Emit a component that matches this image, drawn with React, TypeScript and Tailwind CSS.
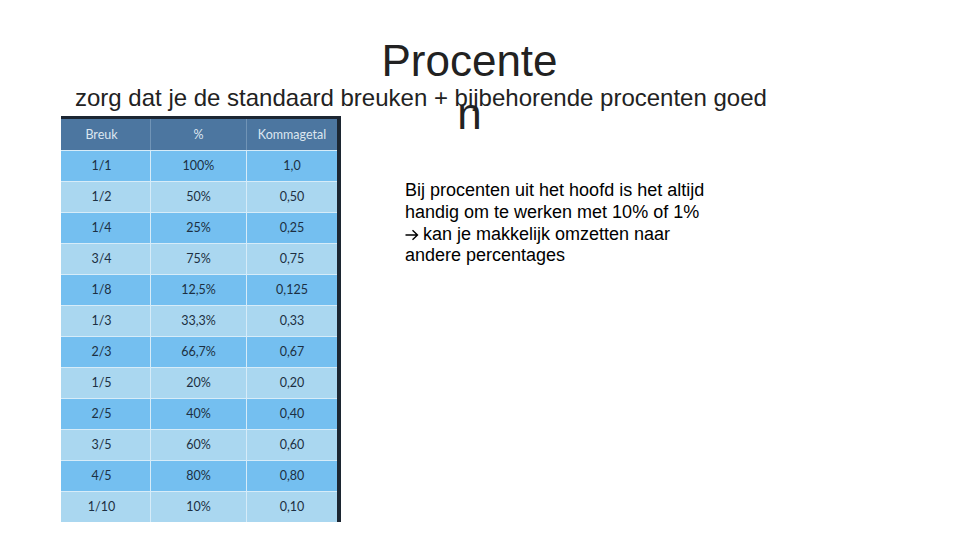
const rows = [
  ['1/1', '100%', '1,0'],
  ['1/2', '50%', '0,50'],
  ['1/4', '25%', '0,25'],
  ['3/4', '75%', '0,75'],
  ['1/8', '12,5%', '0,125'],
  ['1/3', '33,3%', '0,33'],
  ['2/3', '66,7%', '0,67'],
  ['1/5', '20%', '0,20'],
  ['2/5', '40%', '0,40'],
  ['3/5', '60%', '0,60'],
  ['4/5', '80%', '0,80'],
  ['1/10', '10%', '0,10'],
];

function PercentTable() {
  return (
    <div className="ml-[61px] w-[280px] border-t-[3px] border-r-[4px] border-[#1c2632] font-['Lato',sans-serif] text-[12.5px]">
      <div className="grid h-[31px] grid-cols-[89px_96px_91px] bg-[#4c76a0] text-[#dde7f0]">
        <div className="flex items-center justify-center pr-[8px]">Breuk</div>
        <div className="flex items-center justify-center border-l border-[#7194b6]">%</div>
        <div className="flex items-center justify-center border-l border-[#7194b6]">Kommagetal</div>
      </div>
      {rows.map(([breuk, pct, komma], i) => (
        <div
          key={breuk}
          className={
            'grid h-[31px] grid-cols-[89px_96px_91px] border-t border-[#d6ecf9] text-[#1c2f42] ' +
            (i % 2 === 0 ? 'bg-[#74bff0]' : 'bg-[#aad7f0]')
          }
        >
          <div className="flex items-center justify-center pr-[8px]">{breuk}</div>
          <div className="flex items-center justify-center border-l border-[#d6ecf9]">{pct}</div>
          <div className="flex items-center justify-center border-l border-[#d6ecf9]">{komma}</div>
        </div>
      ))}
    </div>
  );
}

export default function App() {
  return (
    <div className="h-[540px] w-[960px] overflow-hidden bg-white font-['Liberation_Sans',Arial,sans-serif] text-[#222]">
      <h1 className="ml-[377px] w-[185px] break-all pt-[35px] text-center text-[44px] leading-[1.2]">
        Procenten
      </h1>
      <p className="relative ml-[75px] mt-[-57px] whitespace-nowrap text-[24px] leading-[1.2]">
        zorg dat je de standaard breuken + bijbehorende procenten goed
      </p>
      <div className="mt-[4px] flex items-start">
        <PercentTable />
        <div className="ml-[64px] mt-[64px] w-[320px] text-[18px] leading-[1.2] text-black">
          <p>Bij procenten uit het hoofd is het altijd handig om te werken met 10% of 1%</p>
          <p>
            <svg width="14" height="12" viewBox="0 0 14 12" className="mr-[4px] inline-block align-[-1px]">
              <path d="M0.5 6h12M7.5 1.2l5 4.8-5 4.8" fill="none" stroke="#000" strokeWidth="1.4" />
            </svg>
            kan je makkelijk omzetten naar andere percentages
          </p>
        </div>
      </div>
    </div>
  );
}
